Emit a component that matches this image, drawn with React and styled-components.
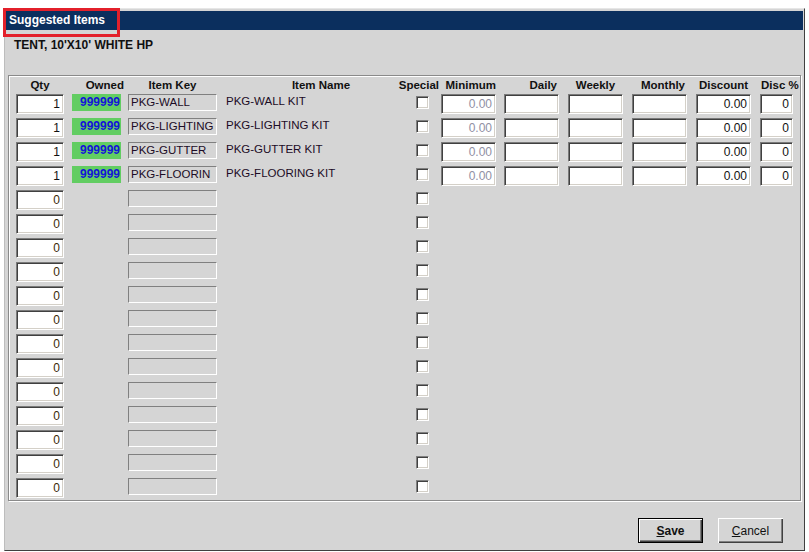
import React from "react";
import styled, { createGlobalStyle } from "styled-components";

const Global = createGlobalStyle`
  html, body { margin: 0; padding: 0; background: #ffffff; }
  body { font-family: "Liberation Sans", Arial, sans-serif; }
  * { box-sizing: border-box; }
`;

const COLS = "56px 56px 98px 190px 25px 63px 64px 64px 64px 64px 34px";

const Window = styled.div`
  margin: 8px 0 0 4px;
  width: 801px;
  height: 543px;
  background: #d5d5d5;
  border: 1px solid;
  border-color: #e6e6e6 #404040 #404040 #bdbdbd;
  padding: 2px 1px 0 1px;
  display: flex;
  flex-direction: column;
`;

const TitleBar = styled.div`
  height: 19px;
  background: #0b2f5e;
  display: flex;
  align-items: center;
  padding-left: 3px;
`;

const TitleLabel = styled.span`
  position: relative;
  color: #ffffff;
  font-weight: bold;
  font-size: 12px;
  line-height: 19px;
  &::after {
    content: "";
    position: absolute;
    left: -6px;
    top: -3px;
    width: 111px;
    height: 23px;
    border: 3px solid #e3202b;
  }
`;

const Subtitle = styled.div`
  margin: 8px 0 0 8px;
  font-size: 12px;
  font-weight: bold;
  line-height: 14px;
  color: #101010;
`;

const Frame = styled.div`
  margin: 23px 0 0 2px;
  width: 793px;
  height: 426px;
  border: 1px solid #8a8a8a;
  box-shadow: inset 1px 1px 0 #ffffff, 1px 1px 0 #ffffff;
  padding: 1px 0 0 7px;
`;

const HeaderRow = styled.div`
  display: grid;
  grid-template-columns: ${COLS};
  height: 17px;
`;

const Row = styled.div`
  display: grid;
  grid-template-columns: ${COLS};
  height: 24px;
  align-items: start;
`;

const Head = styled.div`
  display: flex;
  justify-content: ${(p) => p.$justify || "center"};
  width: ${(p) => p.$w}px;
  padding-left: ${(p) => p.$pl || 0}px;
  font-size: 11.5px;
  font-weight: bold;
  line-height: 16px;
  color: #111;
  white-space: nowrap;
`;

const TextBox = styled.div`
  width: ${(p) => p.$w}px;
  height: 20px;
  background: #ffffff;
  border-style: solid;
  border-width: 1px;
  border-color: #7a7a7a #ffffff #ffffff #7a7a7a;
  box-shadow: inset 1px 1px 0 #404040, inset -1px -1px 0 #d4d0c8;
  text-align: right;
  padding-right: 3px;
  font-size: 12px;
  line-height: 18px;
  color: ${(p) => p.$color || "#111"};
`;

const Owned = styled.div`
  width: 49px;
  height: 17px;
  background: #62cd62;
  color: #1414d8;
  font-weight: bold;
  font-size: 12px;
  line-height: 17px;
  text-align: right;
  padding-right: 1px;
`;

const KeyBox = styled.div`
  width: 89px;
  height: 17px;
  border: 1px solid;
  border-color: #808080 #ffffff #ffffff #808080;
  font-size: 11.5px;
  line-height: 15px;
  padding-left: 2px;
  color: #1c0c26;
  white-space: nowrap;
  overflow: hidden;
`;

const NameText = styled.div`
  font-size: 11.5px;
  line-height: 15px;
  color: #1c0c26;
  white-space: nowrap;
`;

const Check = styled.div`
  width: 13px;
  height: 13px;
  margin-top: 2px;
  background: #ffffff;
  border: 1px solid;
  border-color: #808080 #ffffff #ffffff #808080;
  box-shadow: inset 1px 1px 0 #404040, inset -1px -1px 0 #d4d0c8;
`;

const Empty = styled.div``;

const Footer = styled.div`
  display: flex;
  justify-content: flex-end;
  gap: 15px;
  margin-top: 17px;
  padding-right: 20px;
`;

const Button = styled.button`
  width: 65px;
  height: 25px;
  padding: 0;
  background: #d5d5d5;
  font-family: "Liberation Sans", Arial, sans-serif;
  font-size: 12px;
  font-weight: ${(p) => (p.$default ? "bold" : "normal")};
  color: #111;
  border: ${(p) => (p.$default ? "1px solid #000" : "none")};
  box-shadow: inset 1px 1px 0 #ffffff, inset -1px -1px 0 #404040,
    inset -2px -2px 0 #808080;
  u { text-decoration: underline; }
`;

const filled = [
  { key: "PKG-WALL", name: "PKG-WALL KIT" },
  { key: "PKG-LIGHTING", name: "PKG-LIGHTING KIT" },
  { key: "PKG-GUTTER", name: "PKG-GUTTER KIT" },
  { key: "PKG-FLOORIN", name: "PKG-FLOORING KIT" },
];

export default function App() {
  const zeroRows = Array.from({ length: 13 });
  return (
    <>
      <Global />
      <Window>
        <TitleBar>
          <TitleLabel>Suggested Items</TitleLabel>
        </TitleBar>
        <Subtitle>TENT, 10'X10' WHITE HP</Subtitle>
        <Frame>
          <HeaderRow>
            <Head $w={48}>Qty</Head>
            <Head $w={52} $justify="flex-end">Owned</Head>
            <Head $w={89}>Item Key</Head>
            <Head $w={190}>Item Name</Head>
            <Head $w={23} $justify="flex-end">Special</Head>
            <Head $w={55} $justify="flex-end">Minimum</Head>
            <Head $w={53} $justify="flex-end">Daily</Head>
            <Head $w={55}>Weekly</Head>
            <Head $w={53} $justify="flex-end">Monthly</Head>
            <Head $w={55}>Discount</Head>
            <Head $w={34} $justify="flex-start" $pl={1}>Disc %</Head>
          </HeaderRow>
          {filled.map((r) => (
            <Row key={r.key}>
              <TextBox $w={48}>1</TextBox>
              <Owned>999999</Owned>
              <KeyBox>{r.key}</KeyBox>
              <NameText>{r.name}</NameText>
              <Check />
              <TextBox $w={55} $color="#9090a4">0.00</TextBox>
              <TextBox $w={55} />
              <TextBox $w={55} />
              <TextBox $w={55} />
              <TextBox $w={55}>0.00</TextBox>
              <TextBox $w={33}>0</TextBox>
            </Row>
          ))}
          {zeroRows.map((_, i) => (
            <Row key={i}>
              <TextBox $w={48} $color="#3a2a08">0</TextBox>
              <Empty />
              <KeyBox />
              <Empty />
              <Check />
            </Row>
          ))}
        </Frame>
        <Footer>
          <Button $default>
            <u>S</u>ave
          </Button>
          <Button>
            <u>C</u>ancel
          </Button>
        </Footer>
      </Window>
    </>
  );
}
